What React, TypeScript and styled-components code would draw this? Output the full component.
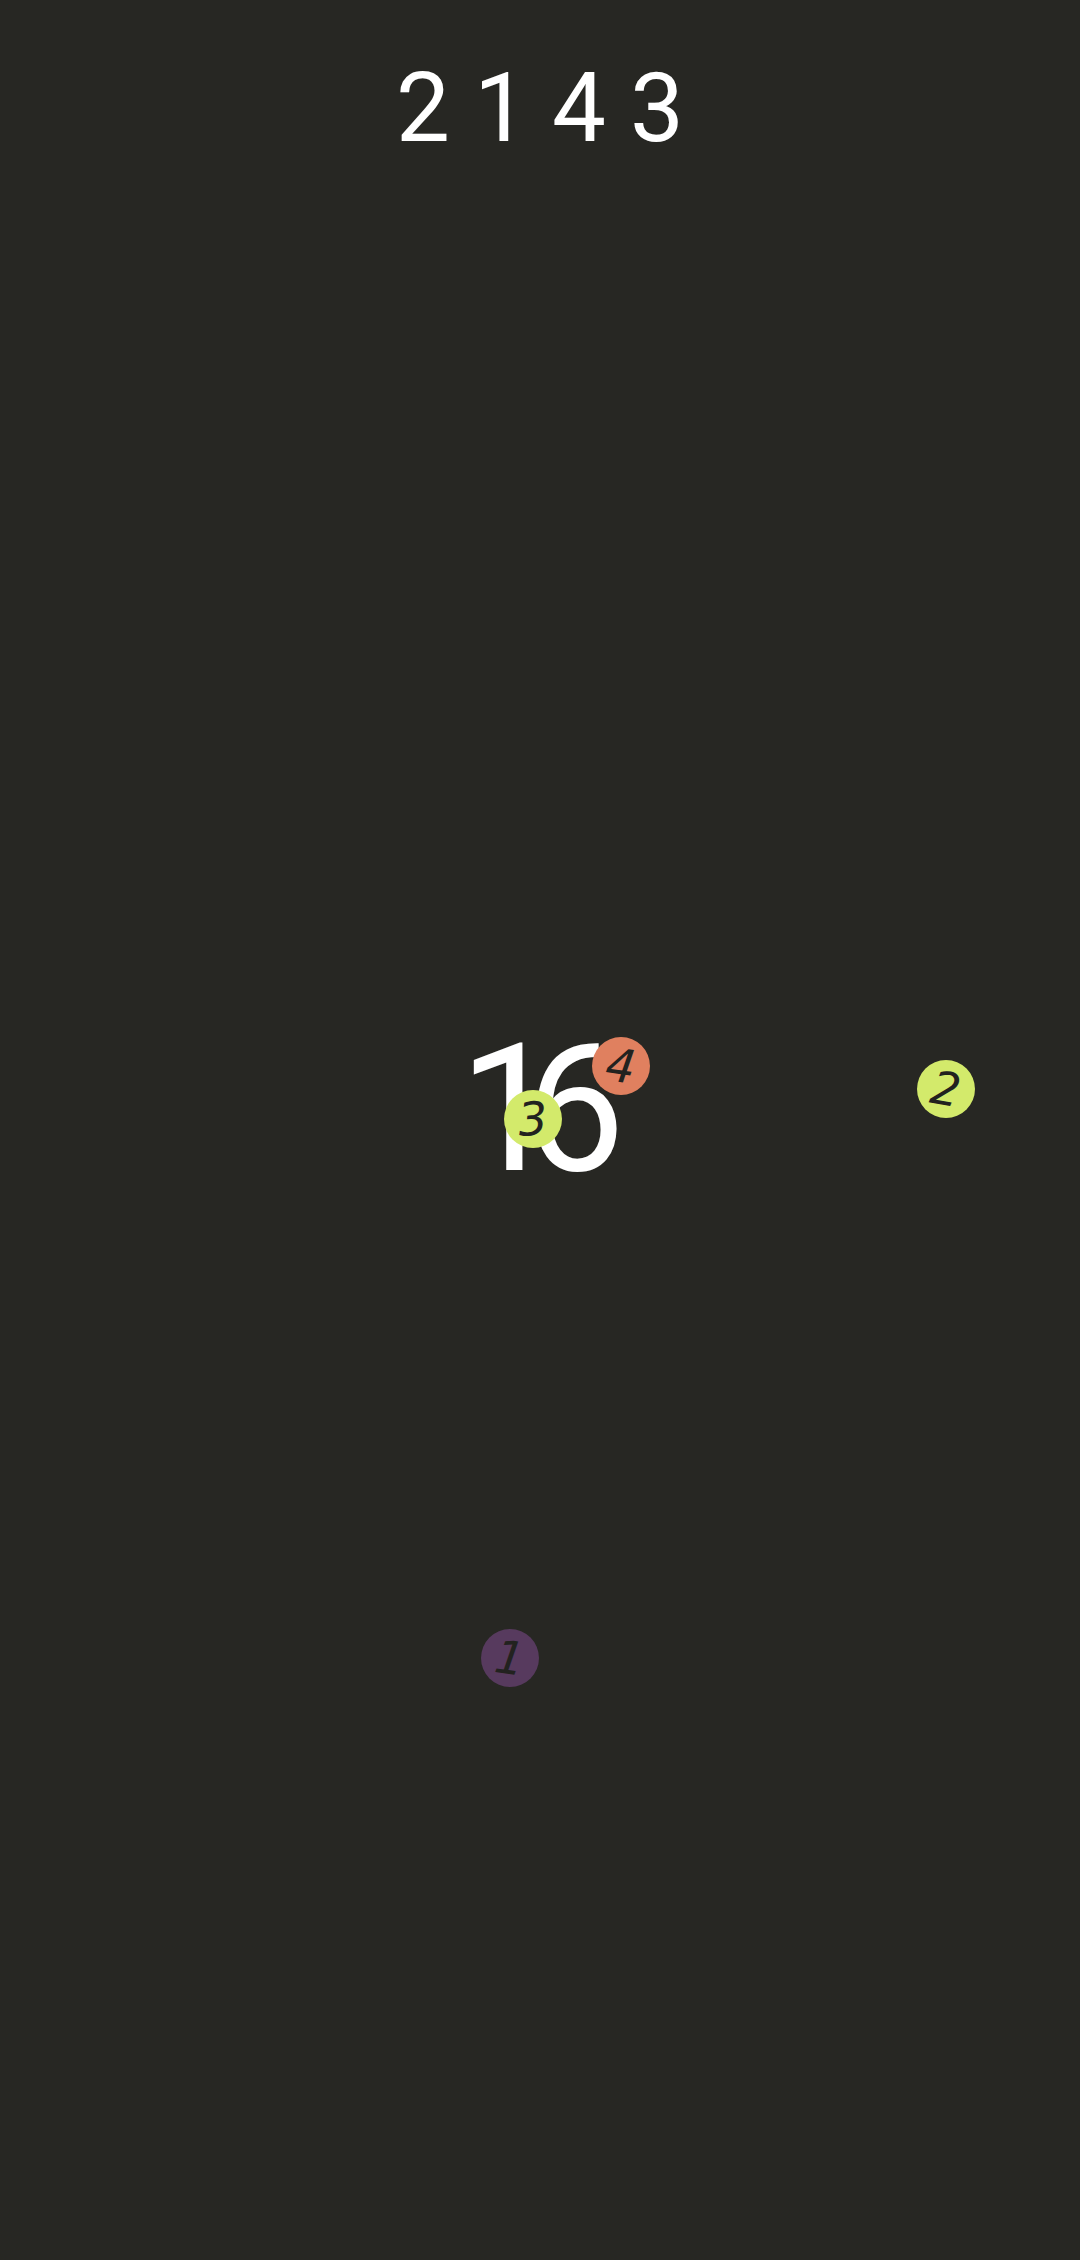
import React from 'react';
import styled, { createGlobalStyle } from 'styled-components';

const GlobalStyle = createGlobalStyle`
  html, body {
    margin: 0;
    padding: 0;
    background: #272723;
  }
`;

const Screen = styled.div`
  position: relative;
  width: 1080px;
  height: 2260px;
  background: #272723;
  overflow: hidden;
  font-family: Roboto, 'Liberation Sans', sans-serif;
  display: flex;
  flex-direction: column;
  align-items: center;
`;

const Sequence = styled.div`
  display: flex;
  gap: 24px;
  margin-top: 52px;
  color: #ffffff;
  font-size: 96px;
  line-height: 112px;
`;

const SeqDigit = styled.span``;

const Board = styled.div`
  flex: 1;
  width: 100%;
  display: flex;
  align-items: center;
  justify-content: center;
  padding-bottom: 206px;
`;

const Score = styled.div`
  color: #ffffff;
  font-size: 178px;
  line-height: 1;
  letter-spacing: -34px;
  margin-right: 30px;
`;

const Bubble = styled.div<{ bg: string }>`
  position: absolute;
  width: 58px;
  height: 58px;
  margin: -29px 0 0 -29px;
  border-radius: 50%;
  background: ${(p) => p.bg};
  display: flex;
  align-items: center;
  justify-content: center;
  color: #22221f;
  font-family: 'DejaVu Sans', sans-serif;
  font-style: italic;
  font-size: 46px;
  line-height: 1;
`;

const BubbleDigit = styled.span<{ tilt: number }>`
  display: inline-block;
  transform: rotate(${(p) => p.tilt}deg);
`;

const bubbles = [
  { n: 4, x: 621, y: 1066, bg: '#e0805f', tilt: 8 },
  { n: 3, x: 533, y: 1119, bg: '#d3ea6b', tilt: -4 },
  { n: 2, x: 946, y: 1089, bg: '#d3ea6b', tilt: 10 },
  { n: 1, x: 510, y: 1658, bg: '#573a5e', tilt: 8 },
];

export default function App() {
  return (
    <Screen>
      <GlobalStyle />
      <Sequence>
        {[2, 1, 4, 3].map((d, i) => (
          <SeqDigit key={i}>{d}</SeqDigit>
        ))}
      </Sequence>
      <Board>
        <Score>16</Score>
      </Board>
      {bubbles.map((b) => (
        <Bubble key={b.n} bg={b.bg} style={{ left: b.x, top: b.y }}>
          <BubbleDigit tilt={b.tilt}>{b.n}</BubbleDigit>
        </Bubble>
      ))}
    </Screen>
  );
}
